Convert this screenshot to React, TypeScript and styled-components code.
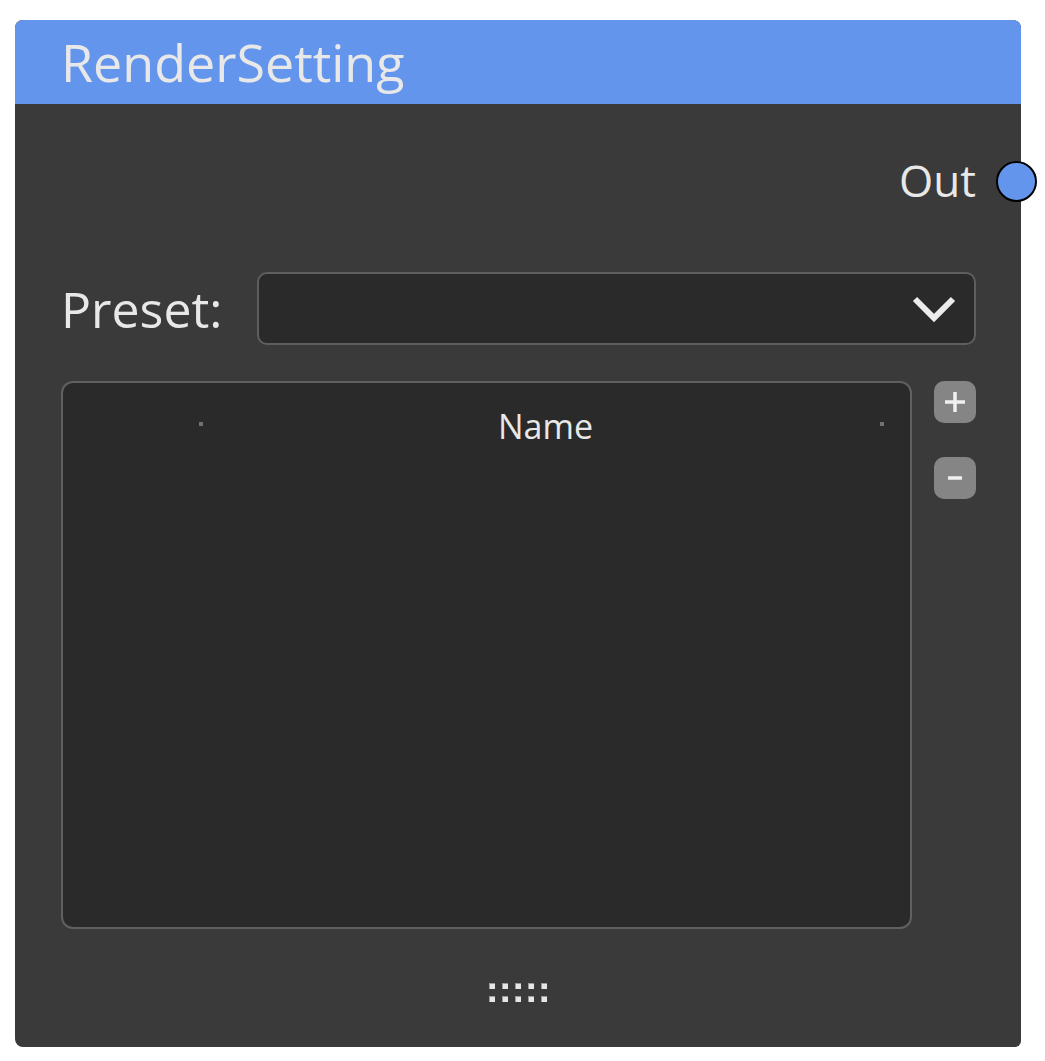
import React from "react";
import styled, { createGlobalStyle } from "styled-components";

const Global = createGlobalStyle`
  html, body { margin: 0; padding: 0; background: #ffffff; }
  body { font-family: "Open Sans", "Noto Sans", sans-serif; }
`;

const Page = styled.div`
  padding: 20px 0 0 15px;
`;

const Node = styled.div`
  position: relative;
  width: 1006px;
  height: 1027px;
  background: #3a3a3a;
  border-radius: 8px 8px 6px 8px;
  display: flex;
  flex-direction: column;
`;

const Header = styled.div`
  height: 84px;
  background: #6495ed;
  border-radius: 8px 8px 0 0;
  display: flex;
  align-items: center;
  padding-left: 46px;
  color: #e8e8e8;
  font-size: 52px;
  line-height: 1;
`;

const Body = styled.div`
  flex: 1;
  display: flex;
  flex-direction: column;
  padding: 0 45px 0 46px;
`;

const OutRow = styled.div`
  position: relative;
  margin-top: 52px;
  height: 48px;
  display: flex;
  align-items: center;
  justify-content: flex-end;
  color: #e8e8e8;
  font-size: 44px;
`;

const Port = styled.div`
  position: absolute;
  right: -61px;
  top: 50%;
  width: 37px;
  height: 37px;
  margin-top: -19px;
  border-radius: 50%;
  background: #6495ed;
  border: 2px solid #000;
`;

const PresetRow = styled.div`
  margin-top: 68px;
  height: 73px;
  display: flex;
  align-items: center;
  gap: 35px;
`;

const Label = styled.div`
  color: #e8e8e8;
  font-size: 50px;
  white-space: nowrap;
`;

const Select = styled.div`
  flex: 1;
  height: 100%;
  box-sizing: border-box;
  background: #2a2a2a;
  border: 2px solid #5e5e5e;
  border-radius: 10px;
  display: flex;
  align-items: center;
  justify-content: flex-end;
  padding-right: 18px;
`;

const ListRow = styled.div`
  margin-top: 36px;
  display: flex;
  gap: 22px;
`;

const Table = styled.div`
  width: 851px;
  height: 548px;
  box-sizing: border-box;
  background: #2a2a2a;
  border: 2px solid #606060;
  border-radius: 12px;
`;

const TableHead = styled.div`
  height: 88px;
  display: grid;
  grid-template-columns: 136px 4px 1fr 4px 26px;
  align-items: center;
  color: #e8e8e8;
  font-size: 34px;
`;

const Grip = styled.span`
  width: 4px;
  height: 4px;
  margin-top: -6px;
  background: #707070;
`;

const ColumnTitle = styled.div`
  text-align: center;
  margin-top: -2px;
  padding-left: 8px;
`;

const Buttons = styled.div`
  display: flex;
  flex-direction: column;
  gap: 34px;
`;

const SmallButton = styled.div`
  width: 42px;
  height: 42px;
  border-radius: 10px;
  background: #858585;
  color: #ececec;
  display: flex;
  align-items: center;
  justify-content: center;
`;

const Resize = styled.div`
  margin-top: 54px;
  align-self: center;
  display: grid;
  grid-template-columns: repeat(5, 6px);
  grid-auto-rows: 6px;
  column-gap: 7px;
  row-gap: 7px;
  margin-right: 2px;
`;

const Dot = styled.span`
  background: #e6e6e6;
  box-shadow: inset 1px 1px 0 #9a9a9a;
`;

export default function App() {
  return (
    <Page>
      <Global />
      <Node>
        <Header>RenderSetting</Header>
        <Body>
          <OutRow>
            Out
            <Port />
          </OutRow>
          <PresetRow>
            <Label>Preset:</Label>
            <Select>
              <svg width="44" height="30" viewBox="0 0 44 30">
                <path d="M3 5 L22 24 L41 5" fill="none" stroke="#ececec" strokeWidth="6" />
              </svg>
            </Select>
          </PresetRow>
          <ListRow>
            <Table>
              <TableHead>
                <span />
                <Grip />
                <ColumnTitle>Name</ColumnTitle>
                <Grip />
                <span />
              </TableHead>
            </Table>
            <Buttons>
              <SmallButton>
                <svg width="22" height="22" viewBox="0 0 22 22">
                  <path d="M11 1 V21 M1 11 H21" stroke="#f0f0f0" strokeWidth="3.5" />
                </svg>
              </SmallButton>
              <SmallButton>
                <svg width="14" height="4" viewBox="0 0 14 4">
                  <path d="M0 2 H14" stroke="#f0f0f0" strokeWidth="3.5" />
                </svg>
              </SmallButton>
            </Buttons>
          </ListRow>
          <Resize>
            {Array.from({ length: 10 }).map((_, i) => (
              <Dot key={i} />
            ))}
          </Resize>
        </Body>
      </Node>
    </Page>
  );
}
